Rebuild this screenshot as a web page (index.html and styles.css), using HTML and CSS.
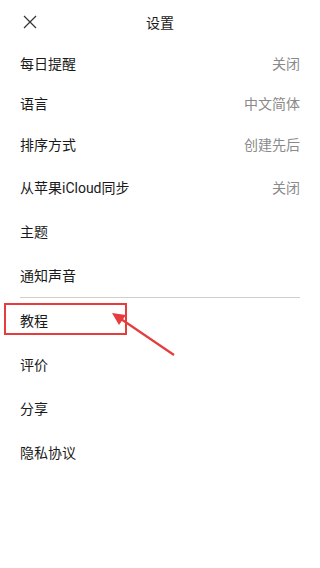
FILE: index.html
```html
<!DOCTYPE html>
<html lang="zh">
<head>
<meta charset="utf-8">
<title>设置</title>
<link rel="stylesheet" href="styles.css">
</head>
<body>
<div class="page">
  <header class="header">
    <span class="close">
      <svg width="14" height="14" viewBox="0 0 14 14"><path d="M1 1L13 13M13 1L1 13" stroke="#333" stroke-width="1.2" fill="none"/></svg>
    </span>
    <h1 class="title">设置</h1>
  </header>
  <ul class="list">
    <li class="row short"><span>每日提醒</span><span class="value">关闭</span></li>
    <li class="row short"><span>语言</span><span class="value">中文简体</span></li>
    <li class="row mid"><span>排序方式</span><span class="value">创建先后</span></li>
    <li class="row"><span>从苹果iCloud同步</span><span class="value">关闭</span></li>
    <li class="row"><span>主题</span></li>
    <li class="row divided"><span>通知声音</span></li>
    <li class="row"><span>教程</span></li>
    <li class="row"><span>评价</span></li>
    <li class="row"><span>分享</span></li>
    <li class="row"><span>隐私协议</span></li>
  </ul>
  <div class="highlight"></div>
  <svg class="arrow" width="320" height="568" viewBox="0 0 320 568">
    <line x1="174" y1="355" x2="121" y2="319" stroke="#e53d3d" stroke-width="2.2"/>
    <polygon points="112,313 126,315 119,325" fill="#e53d3d"/>
  </svg>
</div>
</body>
</html>
```
FILE: styles.css
```css
* { box-sizing: border-box; }
html, body { margin: 0; padding: 0; background: #fff; }
body {
  font-family: Roboto, "Noto Sans CJK SC", sans-serif;
  color: #1a1a1a;
}
.page { position: relative; width: 320px; height: 568px; overflow: hidden; }
.header {
  height: 43px;
  display: flex;
  align-items: center;
  justify-content: center;
  position: relative;
}
.close {
  position: absolute;
  left: 23px;
  top: 15px;
  width: 14px;
  height: 14px;
  display: flex;
}
.title {
  margin: 0;
  font-size: 14px;
  font-weight: 400;
  color: #1a1a1a;
}
.list { list-style: none; margin: 0; padding: 0 20px; }
.row {
  height: 44px;
  display: flex;
  align-items: center;
  justify-content: space-between;
  font-size: 14px;
}
.row.short { height: 40px; }
.row.mid { height: 42px; }
.row.divided { height: 45px; border-bottom: 1px solid #cfcfcf; }
.value { color: #8a8a8a; }
.highlight {
  position: absolute;
  left: 4px;
  top: 303px;
  width: 123px;
  height: 32px;
  border: 2px solid #e53d3d;
}
.arrow { position: absolute; left: 0; top: 0; pointer-events: none; }
```
